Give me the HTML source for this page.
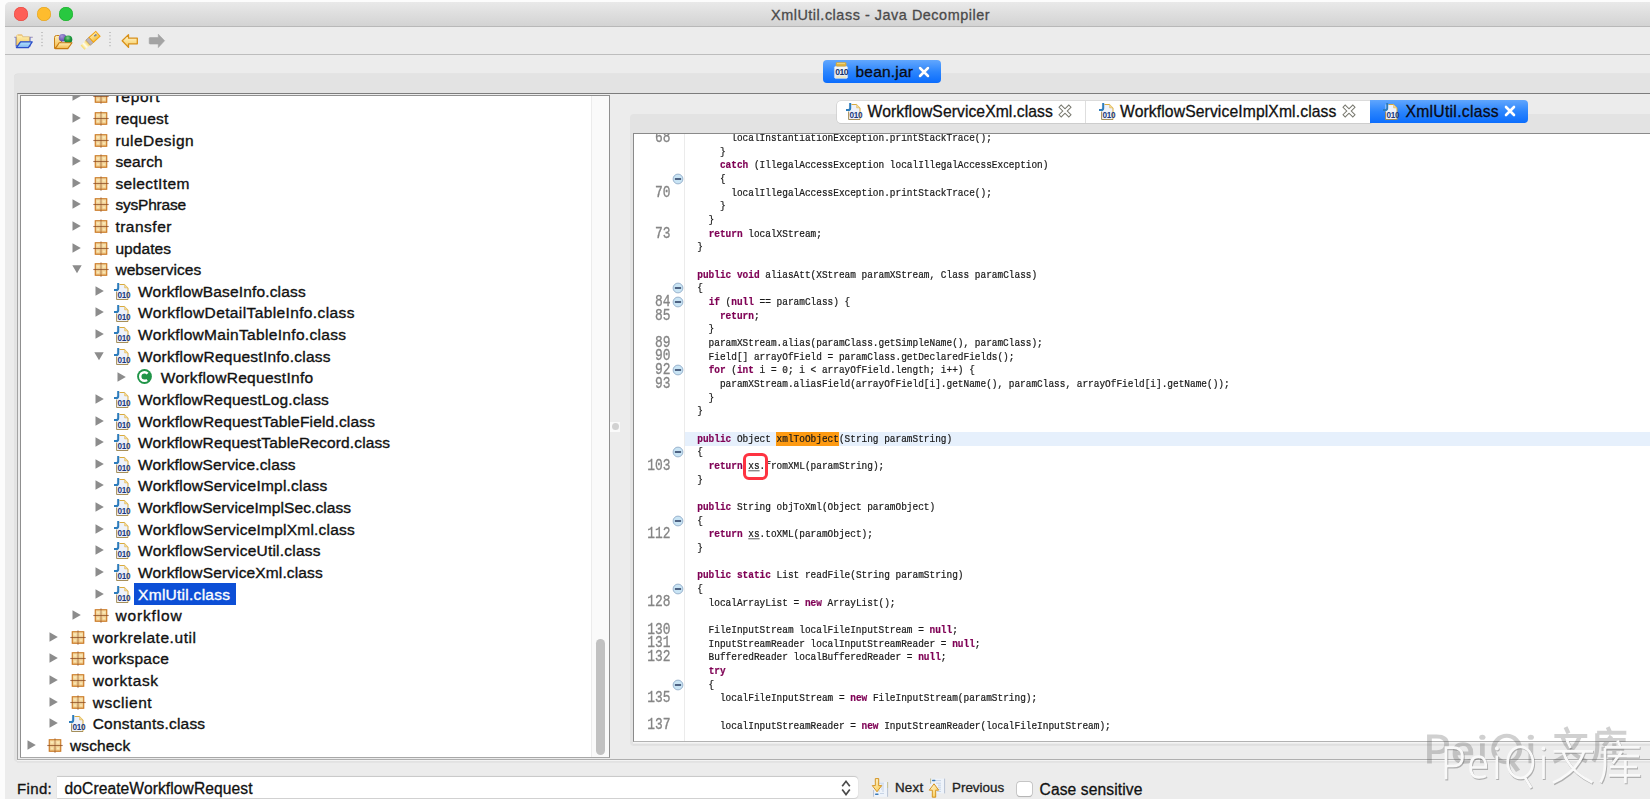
<!DOCTYPE html><html><head><meta charset="utf-8"><style>
*{margin:0;padding:0;box-sizing:border-box}
html,body{width:1650px;height:799px;overflow:hidden;background:#fcfcfc;font-family:"Liberation Sans",sans-serif;position:relative}
.a{position:absolute}
.t{position:absolute;white-space:pre;line-height:1;color:#111;-webkit-text-stroke:0.3px currentColor}
.tr{position:absolute;white-space:pre;line-height:1;font-size:15.5px;letter-spacing:0.1px;color:#111;-webkit-text-stroke:0.35px currentColor}
.cl{position:absolute;left:0;white-space:pre;font-family:"Liberation Mono",monospace;font-size:9.45px;line-height:1;color:#1a1a1a;-webkit-text-stroke:0.2px currentColor}
.k{color:#7f0055;font-weight:bold}
u{text-decoration-color:#777}
.ln{position:absolute;white-space:pre;font-family:"Liberation Mono",monospace;font-size:12.9px;line-height:1;color:#858585;transform:scaleY(1.27);-webkit-text-stroke:0.25px currentColor}
svg{position:absolute;overflow:visible}
</style></head><body><svg width="0" height="0" style="position:absolute"><defs>
<linearGradient id="gpk" x1="0" y1="0" x2="0" y2="1"><stop offset="0" stop-color="#f6deaa"/><stop offset="1" stop-color="#eec685"/></linearGradient>
<radialGradient id="gspot"><stop offset="0" stop-color="#fff6c8"/><stop offset="1" stop-color="#f3d49a" stop-opacity="0"/></radialGradient>
<symbol id="pkg" viewBox="0 0 16 16">
 <rect x="2.25" y="1.75" width="11.5" height="11.5" fill="url(#gpk)" stroke="#c9751e" stroke-width="1.1"/>
 <circle cx="5" cy="4.6" r="2.2" fill="url(#gspot)"/><circle cx="11" cy="4.6" r="2.2" fill="url(#gspot)"/>
 <circle cx="5" cy="10.4" r="2.2" fill="url(#gspot)"/><circle cx="11" cy="10.4" r="2.2" fill="url(#gspot)"/>
 <line x1="0.3" y1="7.5" x2="15.7" y2="7.5" stroke="#8a4a22" stroke-width="1.1" stroke-opacity="0.75"/>
 <line x1="8" y1="0.2" x2="8" y2="15" stroke="#8a4a22" stroke-width="1.1" stroke-opacity="0.55"/>
</symbol>
<symbol id="cls" viewBox="0 0 18 17">
 <path d="M2.6,16.5 V1.5 H10.6 L14,4.9 V16.5 Z" fill="#eef2fa"/>
 <path d="M5.5,1.5 H10.6 L14,4.9 V16.5" fill="none" stroke="#d6a534" stroke-width="0.95"/>
 <path d="M10.6,1.5 V4.9 H14" fill="#f4dc98" stroke="#e0b048" stroke-width="0.5"/>
 <path d="M2.6,8.5 V16.5 H14" stroke="#a08850" stroke-width="0.95" fill="none"/>
 <path d="M4.2,0 V5.2 Q4.2,7 2.3,7 H0" fill="none" stroke="#2c7cbc" stroke-width="2"/>
 <text x="3.6" y="14.8" font-family="Liberation Sans" font-weight="bold" font-size="8.2" fill="#1c3a80" letter-spacing="-0.35">010</text>
</symbol>
<symbol id="arR" viewBox="0 0 10 10"><path d="M0.5,0.3 L8.8,5 L0.5,9.7 Z" fill="#8c8c8c"/></symbol>
<symbol id="arD" viewBox="0 0 10 10"><path d="M0.3,1.3 L9.7,1.3 L5,9.2 Z" fill="#8c8c8c"/></symbol>
<symbol id="fold" viewBox="0 0 12 12">
 <circle cx="6" cy="6" r="4.9" fill="#c9e4f4" stroke="#93adc8" stroke-width="0.9"/>
 <rect x="2.9" y="5.25" width="6.2" height="1.5" fill="#26385e"/>
</symbol>
</defs></svg><div class="a" style="left:5px;top:2px;width:1650px;height:797px;background:#ececec;border-top-left-radius:5px"></div><div class="a" style="left:5px;top:2px;width:1650px;height:25px;background:linear-gradient(#e9e9e9,#d3d3d3);border-top-left-radius:5px;border-bottom:1px solid #b8b8b8"></div><div class="a" style="left:14px;top:7.2px;width:14px;height:14px;border-radius:50%;background:#fe5f57;box-shadow:inset 0 0 0 0.5px #e2463f"></div><div class="a" style="left:36.8px;top:7.2px;width:14px;height:14px;border-radius:50%;background:#febc2e;box-shadow:inset 0 0 0 0.5px #dea123"></div><div class="a" style="left:59.3px;top:7.2px;width:14px;height:14px;border-radius:50%;background:#28c840;box-shadow:inset 0 0 0 0.5px #1dad2b"></div><div class="t" style="left:771px;top:7.71px;font-size:14.4px;letter-spacing:0.54px;color:#4a4a4a">XmlUtil.class - Java Decompiler</div><div class="a" style="left:5px;top:53.8px;width:1650px;height:1.4px;background:#bdbdbd"></div><svg style="left:13px;top:33px" width="20" height="16" viewBox="0 0 20 16">
<defs><linearGradient id="gfy" x1="0" y1="0" x2="0" y2="1"><stop offset="0" stop-color="#fff2b8"/><stop offset="1" stop-color="#f4c85a"/></linearGradient>
<linearGradient id="gfb" x1="0" y1="0" x2="0" y2="1"><stop offset="0" stop-color="#b4e6ff"/><stop offset="1" stop-color="#7fb2ee"/></linearGradient></defs>
<path d="M1.2,3.8 H19.8 V4.6 H1.2 Z" fill="#8b7aa8"/>
<path d="M2.6,4.2 V13.6 H17.5 V4.2 Z" fill="#5060c8"/>
<path d="M3.6,12 L3.6,3 Q3.6,1.8 4.8,1.8 H8.4 Q9.4,1.8 9.6,3 V3.8 H16.4 V8.6 H7.6 L4.4,12.5 Z" fill="url(#gfy)" stroke="#e0b050" stroke-width="0.5"/>
<path d="M5,1.6 H9.2 V2.6 H5 Z" fill="#e8b870"/>
<path d="M7.6,8.8 H19.2 L15.4,14.6 H3.4 Z" fill="url(#gfb)" stroke="#2c4fc8" stroke-width="1.3" stroke-linejoin="round"/>
</svg><svg style="left:41.4px;top:31px" width="2" height="16" viewBox="0 0 2 16"><g fill="#9a9a9a"><rect x="0.5" y="1" width="1" height="1"/><rect x="0.5" y="4.3" width="1" height="1"/><rect x="0.5" y="7.6" width="1" height="1"/><rect x="0.5" y="10.9" width="1" height="1"/><rect x="0.5" y="14.2" width="1" height="1"/></g></svg><svg style="left:108.5px;top:31px" width="2" height="16" viewBox="0 0 2 16"><g fill="#9a9a9a"><rect x="0.5" y="1" width="1" height="1"/><rect x="0.5" y="4.3" width="1" height="1"/><rect x="0.5" y="7.6" width="1" height="1"/><rect x="0.5" y="10.9" width="1" height="1"/><rect x="0.5" y="14.2" width="1" height="1"/></g></svg><svg style="left:53px;top:32px" width="20" height="18" viewBox="0 0 20 18">
<defs><linearGradient id="gfo" x1="0" y1="0" x2="0" y2="1"><stop offset="0" stop-color="#fff0b8"/><stop offset="1" stop-color="#f2b848"/></linearGradient>
<radialGradient id="gsp1" cx="0.4" cy="0.3" r="0.7"><stop offset="0" stop-color="#a89ad8"/><stop offset="1" stop-color="#5a44a8"/></radialGradient>
<radialGradient id="gsp2" cx="0.45" cy="0.3" r="0.7"><stop offset="0" stop-color="#8ad08a"/><stop offset="0.5" stop-color="#1e9a40"/><stop offset="1" stop-color="#127a30"/></radialGradient></defs>
<path d="M1.5,16.5 V5.5 Q1.5,3.5 3.5,3.5 H6 L7,5 H9 V9 Z" fill="url(#gfo)" stroke="#c88018" stroke-width="1"/>
<circle cx="9.6" cy="5.8" r="3.8" fill="url(#gsp1)"/>
<circle cx="15.2" cy="7.6" r="4.1" fill="url(#gsp2)"/>
<path d="M6.2,10.7 H19 L14.8,16.6 H2.3 Z" fill="url(#gfo)" stroke="#c87a10" stroke-width="1.1" stroke-linejoin="round"/>
</svg><svg style="left:79px;top:30px" width="23" height="21" viewBox="0 0 23 21">
<defs><linearGradient id="gpen" x1="0" y1="0" x2="1" y2="0"><stop offset="0" stop-color="#f8d860"/><stop offset="0.45" stop-color="#fffef0"/><stop offset="1" stop-color="#f6d050"/></linearGradient>
<linearGradient id="gcap" x1="0" y1="0" x2="0" y2="1"><stop offset="0" stop-color="#ffe9a0"/><stop offset="1" stop-color="#f4c040"/></linearGradient></defs>
<g transform="translate(11.4,10.6) rotate(-42) scale(0.86,0.92)">
<path d="M-12.2,-3.2 L-3.5,-3.6 V3.6 L-12.2,3.2 Z" fill="url(#gpen)"/>
<rect x="-3.6" y="-3.7" width="5" height="7.4" fill="#b9b2bc" stroke="#a88c58" stroke-width="0.7"/>
<rect x="1.4" y="-3.5" width="10.4" height="7" fill="url(#gcap)" stroke="#f0a010" stroke-width="1.1"/>
<circle cx="7.6" cy="-0.6" r="0.8" fill="#3a5aa8"/><circle cx="9.2" cy="-0.6" r="0.8" fill="#3a5aa8"/>
</g>
</svg><svg style="left:121px;top:33px" width="18" height="16" viewBox="0 0 18 16">
<defs><linearGradient id="garr" x1="0" y1="0" x2="0" y2="1"><stop offset="0" stop-color="#fffae0"/><stop offset="1" stop-color="#f6c850"/></linearGradient></defs>
<path d="M1.2,7.7 L7.5,1.6 V5.2 H16.3 V10.8 H7.5 V14.4 Z" fill="url(#garr)" stroke="#d89018" stroke-width="1.3" stroke-linejoin="round"/>
</svg><svg style="left:148px;top:33px" width="18" height="16" viewBox="0 0 18 16">
<path d="M16.6,7.7 L10.3,1.2 V4.6 H2 Q1.2,4.6 1.2,5.4 V10.2 Q1.2,11 2,11 H10.3 V14.6 Z" fill="#a3a3a3" stroke="#a3a3a3" stroke-width="0.6" stroke-linejoin="round"/>
</svg><div class="a" style="left:14px;top:74px;width:1650px;height:688px;background:#e3e3e3;border-radius:4px;box-shadow:0 -0.5px 0 #dcdcdc"></div><div class="a" style="left:17px;top:93px;width:1650px;height:667px;background:#ececec;border-top:1px solid #7c7c7c;border-left:1.5px solid #a4a4a4;border-bottom:1.8px solid #afafaf;box-shadow:0 1.2px 0 #f3f3f3, 0 2.6px 0 #dedede"></div><div class="a" style="left:822.5px;top:60px;width:118px;height:23px;border-radius:4px;background:linear-gradient(#62a7fd,#2d86fd 50%,#0a6cfd)"></div><svg style="left:834px;top:62px" width="14" height="17" viewBox="0 0 14 17">
<defs><linearGradient id="gjar" x1="0" y1="0" x2="0" y2="1"><stop offset="0" stop-color="#f4f8fc"/><stop offset="1" stop-color="#dfe8f2"/></linearGradient></defs>
<path d="M1.2,4.2 H12.8 L13.6,5.4 V15.2 L12.6,16.6 H1.4 L0.4,15.2 V5.4 Z" fill="url(#gjar)" stroke="#cfd8e4" stroke-width="0.5"/>
<rect x="1.8" y="0.2" width="10.6" height="4.3" rx="1.4" fill="#d9ad3c"/>
<rect x="3" y="1" width="8" height="1.2" fill="#ecd27a"/>
<rect x="2.2" y="14.3" width="9.8" height="1.5" fill="#f2e6b4"/>
<text x="1.2" y="12.6" font-family="Liberation Sans" font-weight="bold" font-size="8.6" fill="#17346e" letter-spacing="-0.45">010</text>
</svg><div class="t" style="left:855.5px;top:63.58px;font-size:15.5px;letter-spacing:0.2px;color:#0a0a12">bean.jar</div><svg style="left:918.3px;top:65.5px" width="12" height="12" viewBox="0 0 12 12"><path d="M2,2 L10,10 M10,2 L2,10" stroke="#5a6f90" stroke-width="3.4" stroke-linecap="round" stroke-opacity="0.35"/><path d="M2,2 L10,10 M10,2 L2,10" stroke="#fff" stroke-width="2.5" stroke-linecap="round"/></svg><div class="a" style="left:20px;top:95px;width:590px;height:663px;background:#fff;border:1px solid #8f8f8f;border-bottom-color:#a8a8a8;overflow:hidden" id="tree"><div class="a" style="left:570px;top:0;width:19px;height:661px;background:#fafafa;border-left:1px solid #ececec"></div><div class="a" style="left:574.5px;top:543px;width:9px;height:116px;border-radius:4.5px;background:#c1c1c1"></div><svg style="left:50.90px;top:-4.72px" width="10" height="10"><use href="#arR"/></svg><svg style="left:71.50px;top:-6.72px" width="16" height="16"><use href="#pkg"/></svg><div class="tr" style="left:94.40px;top:-6.74px;letter-spacing:0.740px">report</div><svg style="left:50.90px;top:16.90px" width="10" height="10"><use href="#arR"/></svg><svg style="left:71.50px;top:14.90px" width="16" height="16"><use href="#pkg"/></svg><div class="tr" style="left:94.40px;top:14.88px;letter-spacing:0.183px">request</div><svg style="left:50.90px;top:38.52px" width="10" height="10"><use href="#arR"/></svg><svg style="left:71.50px;top:36.52px" width="16" height="16"><use href="#pkg"/></svg><div class="tr" style="left:94.40px;top:36.50px;letter-spacing:0.456px">ruleDesign</div><svg style="left:50.90px;top:60.14px" width="10" height="10"><use href="#arR"/></svg><svg style="left:71.50px;top:58.14px" width="16" height="16"><use href="#pkg"/></svg><div class="tr" style="left:94.40px;top:58.12px;letter-spacing:0.160px">search</div><svg style="left:50.90px;top:81.76px" width="10" height="10"><use href="#arR"/></svg><svg style="left:71.50px;top:79.76px" width="16" height="16"><use href="#pkg"/></svg><div class="tr" style="left:94.40px;top:79.74px;letter-spacing:0.367px">selectItem</div><svg style="left:50.90px;top:103.38px" width="10" height="10"><use href="#arR"/></svg><svg style="left:71.50px;top:101.38px" width="16" height="16"><use href="#pkg"/></svg><div class="tr" style="left:94.40px;top:101.36px;letter-spacing:-0.200px">sysPhrase</div><svg style="left:50.90px;top:125.00px" width="10" height="10"><use href="#arR"/></svg><svg style="left:71.50px;top:123.00px" width="16" height="16"><use href="#pkg"/></svg><div class="tr" style="left:94.40px;top:122.98px;letter-spacing:0.500px">transfer</div><svg style="left:50.90px;top:146.62px" width="10" height="10"><use href="#arR"/></svg><svg style="left:71.50px;top:144.62px" width="16" height="16"><use href="#pkg"/></svg><div class="tr" style="left:94.40px;top:144.60px;letter-spacing:0.067px">updates</div><svg style="left:50.60px;top:168.44px" width="10" height="10"><use href="#arD"/></svg><svg style="left:71.50px;top:166.24px" width="16" height="16"><use href="#pkg"/></svg><div class="tr" style="left:94.40px;top:166.22px;letter-spacing:0.050px">webservices</div><svg style="left:73.60px;top:189.86px" width="10" height="10"><use href="#arR"/></svg><svg style="left:93.30px;top:186.96px" width="18" height="17"><use href="#cls"/></svg><div class="tr" style="left:117.10px;top:187.84px;letter-spacing:0.157px">WorkflowBaseInfo.class</div><svg style="left:73.60px;top:211.48px" width="10" height="10"><use href="#arR"/></svg><svg style="left:93.30px;top:208.58px" width="18" height="17"><use href="#cls"/></svg><div class="tr" style="left:117.10px;top:209.46px;letter-spacing:0.382px">WorkflowDetailTableInfo.class</div><svg style="left:73.60px;top:233.10px" width="10" height="10"><use href="#arR"/></svg><svg style="left:93.30px;top:230.20px" width="18" height="17"><use href="#cls"/></svg><div class="tr" style="left:117.10px;top:231.08px;letter-spacing:0.323px">WorkflowMainTableInfo.class</div><svg style="left:73.30px;top:254.92px" width="10" height="10"><use href="#arD"/></svg><svg style="left:93.30px;top:251.82px" width="18" height="17"><use href="#cls"/></svg><div class="tr" style="left:117.10px;top:252.70px;letter-spacing:0.242px">WorkflowRequestInfo.class</div><svg style="left:96.30px;top:276.34px" width="10" height="10"><use href="#arR"/></svg><svg style="left:116.00px;top:273.44px" width="15" height="15" viewBox="0 0 15 15"><circle cx="7.5" cy="7.5" r="7.4" fill="#1f9447"/><circle cx="7.5" cy="7.5" r="4.3" fill="none" stroke="#fff" stroke-width="2.5" stroke-dasharray="19.3 7.7" stroke-dashoffset="-3.85"/></svg><div class="tr" style="left:139.80px;top:274.32px;letter-spacing:0.300px">WorkflowRequestInfo</div><svg style="left:73.60px;top:297.96px" width="10" height="10"><use href="#arR"/></svg><svg style="left:93.30px;top:295.06px" width="18" height="17"><use href="#cls"/></svg><div class="tr" style="left:117.10px;top:295.94px;letter-spacing:0.178px">WorkflowRequestLog.class</div><svg style="left:73.60px;top:319.58px" width="10" height="10"><use href="#arR"/></svg><svg style="left:93.30px;top:316.68px" width="18" height="17"><use href="#cls"/></svg><div class="tr" style="left:117.10px;top:317.56px;letter-spacing:0.180px">WorkflowRequestTableField.class</div><svg style="left:73.60px;top:341.20px" width="10" height="10"><use href="#arR"/></svg><svg style="left:93.30px;top:338.30px" width="18" height="17"><use href="#cls"/></svg><div class="tr" style="left:117.10px;top:339.18px;letter-spacing:0.135px">WorkflowRequestTableRecord.class</div><svg style="left:73.60px;top:362.82px" width="10" height="10"><use href="#arR"/></svg><svg style="left:93.30px;top:359.92px" width="18" height="17"><use href="#cls"/></svg><div class="tr" style="left:117.10px;top:360.80px;letter-spacing:0.135px">WorkflowService.class</div><svg style="left:73.60px;top:384.44px" width="10" height="10"><use href="#arR"/></svg><svg style="left:93.30px;top:381.54px" width="18" height="17"><use href="#cls"/></svg><div class="tr" style="left:117.10px;top:382.42px;letter-spacing:0.212px">WorkflowServiceImpl.class</div><svg style="left:73.60px;top:406.06px" width="10" height="10"><use href="#arR"/></svg><svg style="left:93.30px;top:403.16px" width="18" height="17"><use href="#cls"/></svg><div class="tr" style="left:117.10px;top:404.04px;letter-spacing:0.081px">WorkflowServiceImplSec.class</div><svg style="left:73.60px;top:427.68px" width="10" height="10"><use href="#arR"/></svg><svg style="left:93.30px;top:424.78px" width="18" height="17"><use href="#cls"/></svg><div class="tr" style="left:117.10px;top:425.66px;letter-spacing:0.222px">WorkflowServiceImplXml.class</div><svg style="left:73.60px;top:449.30px" width="10" height="10"><use href="#arR"/></svg><svg style="left:93.30px;top:446.40px" width="18" height="17"><use href="#cls"/></svg><div class="tr" style="left:117.10px;top:447.28px;letter-spacing:0.217px">WorkflowServiceUtil.class</div><svg style="left:73.60px;top:470.92px" width="10" height="10"><use href="#arR"/></svg><svg style="left:93.30px;top:468.02px" width="18" height="17"><use href="#cls"/></svg><div class="tr" style="left:117.10px;top:468.90px;letter-spacing:0.139px">WorkflowServiceXml.class</div><svg style="left:73.60px;top:492.54px" width="10" height="10"><use href="#arR"/></svg><svg style="left:93.30px;top:489.64px" width="18" height="17"><use href="#cls"/></svg><div class="a" style="left:112.80px;top:487.30px;width:102.2px;height:21.4px;background:#0d4fd6"></div><div class="tr" style="left:117.10px;top:490.52px;color:#fff;letter-spacing:0.267px">XmlUtil.class</div><svg style="left:50.90px;top:514.16px" width="10" height="10"><use href="#arR"/></svg><svg style="left:71.50px;top:512.16px" width="16" height="16"><use href="#pkg"/></svg><div class="tr" style="left:94.40px;top:512.14px;letter-spacing:0.843px">workflow</div><svg style="left:28.20px;top:535.78px" width="10" height="10"><use href="#arR"/></svg><svg style="left:48.80px;top:533.78px" width="16" height="16"><use href="#pkg"/></svg><div class="tr" style="left:71.70px;top:533.76px;letter-spacing:0.543px">workrelate.util</div><svg style="left:28.20px;top:557.40px" width="10" height="10"><use href="#arR"/></svg><svg style="left:48.80px;top:555.40px" width="16" height="16"><use href="#pkg"/></svg><div class="tr" style="left:71.70px;top:555.38px;letter-spacing:0.250px">workspace</div><svg style="left:28.20px;top:579.02px" width="10" height="10"><use href="#arR"/></svg><svg style="left:48.80px;top:577.02px" width="16" height="16"><use href="#pkg"/></svg><div class="tr" style="left:71.70px;top:577.00px;letter-spacing:0.600px">worktask</div><svg style="left:28.20px;top:600.64px" width="10" height="10"><use href="#arR"/></svg><svg style="left:48.80px;top:598.64px" width="16" height="16"><use href="#pkg"/></svg><div class="tr" style="left:71.70px;top:598.62px;letter-spacing:0.543px">wsclient</div><svg style="left:28.20px;top:622.26px" width="10" height="10"><use href="#arR"/></svg><svg style="left:47.90px;top:619.36px" width="18" height="17"><use href="#cls"/></svg><div class="tr" style="left:71.70px;top:620.24px;letter-spacing:0.214px">Constants.class</div><svg style="left:5.50px;top:643.88px" width="10" height="10"><use href="#arR"/></svg><svg style="left:26.10px;top:641.88px" width="16" height="16"><use href="#pkg"/></svg><div class="tr" style="left:49.00px;top:641.86px;letter-spacing:0.117px">wscheck</div></div><div class="a" style="left:610px;top:422px;width:10px;height:10px;background:#fafafa"></div><div class="a" style="left:611.8px;top:423.1px;width:7px;height:7px;border-radius:50%;background:#d2d2d2"></div><div class="a" style="left:630px;top:113.5px;width:1040px;height:632px;background:#e3e3e3;border-radius:4px"></div><div class="a" style="left:837px;top:100.5px;width:534px;height:22px;background:#fff;border-radius:4px 0 0 4px;box-shadow:0 0 0 0.6px #c9c9c9, 0 0.6px 0.6px #bdbdbd"></div><div class="a" style="left:1085px;top:100.5px;width:1px;height:22px;background:#dedede"></div><div class="a" style="left:1370px;top:100px;width:158px;height:23px;border-radius:0 4px 4px 0;background:linear-gradient(#60a6fd,#2b85fd 50%,#0b6dfd)"></div><svg style="left:846px;top:103px" width="18" height="17"><use href="#cls"/></svg><div class="t" style="left:867.6px;top:103.81px;font-size:15.7px;letter-spacing:0.07px;color:#111">WorkflowServiceXml.class</div><svg style="left:1099px;top:103px" width="18" height="17"><use href="#cls"/></svg><div class="t" style="left:1120px;top:103.81px;font-size:15.7px;letter-spacing:0.115px;color:#111">WorkflowServiceImplXml.class</div><svg style="left:1383px;top:103px" width="18" height="17"><use href="#cls"/></svg><div class="t" style="left:1405.5px;top:103.81px;font-size:15.7px;letter-spacing:0.28px;color:#0a0a14">XmlUtil.class</div><svg style="left:1059.2px;top:105px" width="12" height="12" viewBox="0 0 12 12"><path d="M2.2,2.2 L9.8,9.8 M9.8,2.2 L2.2,9.8" stroke="#76766c" stroke-width="4.1" stroke-linecap="square"/><path d="M2.2,2.2 L9.8,9.8 M9.8,2.2 L2.2,9.8" stroke="#fff" stroke-width="2.2" stroke-linecap="square"/></svg><svg style="left:1343px;top:105px" width="12" height="12" viewBox="0 0 12 12"><path d="M2.2,2.2 L9.8,9.8 M9.8,2.2 L2.2,9.8" stroke="#76766c" stroke-width="4.1" stroke-linecap="square"/><path d="M2.2,2.2 L9.8,9.8 M9.8,2.2 L2.2,9.8" stroke="#fff" stroke-width="2.2" stroke-linecap="square"/></svg><svg style="left:1504px;top:105px" width="12" height="12" viewBox="0 0 12 12"><path d="M2,2 L10,10 M10,2 L2,10" stroke="#fff" stroke-width="2.6" stroke-linecap="round"/></svg><div class="a" style="left:633px;top:133px;width:1030px;height:609px;background:#fff;border:1px solid #8a8a8a;border-bottom:1.7px solid #b2b2b2;box-shadow:0 1.6px 0 #f5f5f5, 0 3.2px 0 #dfdfdf;overflow:hidden"><div class="a" style="left:50px;top:0;width:1px;height:610px;background:#ebebeb"></div><div class="cl" style="left:63.299999999999955px;top:0.16px;transform-origin:0 7.24px;transform:scaleY(1.2)">      localInstantiationException.printStackTrace();</div><div class="ln" style="left:20.92px;top:-1.08px;transform-origin:0 9.88px">68</div><div class="cl" style="left:63.299999999999955px;top:13.82px;transform-origin:0 7.24px;transform:scaleY(1.2)">    }</div><div class="cl" style="left:63.299999999999955px;top:27.48px;transform-origin:0 7.24px;transform:scaleY(1.2)">    <span class="k">catch</span> (IllegalAccessException localIllegalAccessException)</div><div class="cl" style="left:63.299999999999955px;top:41.14px;transform-origin:0 7.24px;transform:scaleY(1.2)">    {</div><svg style="left:38px;top:39.18px" width="12" height="12"><use href="#fold"/></svg><div class="cl" style="left:63.299999999999955px;top:54.80px;transform-origin:0 7.24px;transform:scaleY(1.2)">      localIllegalAccessException.printStackTrace();</div><div class="ln" style="left:20.92px;top:53.56px;transform-origin:0 9.88px">70</div><div class="cl" style="left:63.299999999999955px;top:68.46px;transform-origin:0 7.24px;transform:scaleY(1.2)">    }</div><div class="cl" style="left:63.299999999999955px;top:82.12px;transform-origin:0 7.24px;transform:scaleY(1.2)">  }</div><div class="cl" style="left:63.299999999999955px;top:95.78px;transform-origin:0 7.24px;transform:scaleY(1.2)">  <span class="k">return</span> localXStream;</div><div class="ln" style="left:20.92px;top:94.54px;transform-origin:0 9.88px">73</div><div class="cl" style="left:63.299999999999955px;top:109.44px;transform-origin:0 7.24px;transform:scaleY(1.2)">}</div><div class="cl" style="left:63.299999999999955px;top:123.10px;transform-origin:0 7.24px;transform:scaleY(1.2)"></div><div class="cl" style="left:63.299999999999955px;top:136.76px;transform-origin:0 7.24px;transform:scaleY(1.2)"><span class="k">public</span> <span class="k">void</span> aliasAtt(XStream paramXStream, Class paramClass)</div><div class="cl" style="left:63.299999999999955px;top:150.42px;transform-origin:0 7.24px;transform:scaleY(1.2)">{</div><svg style="left:38px;top:148.46px" width="12" height="12"><use href="#fold"/></svg><div class="cl" style="left:63.299999999999955px;top:164.08px;transform-origin:0 7.24px;transform:scaleY(1.2)">  <span class="k">if</span> (<span class="k">null</span> == paramClass) {</div><div class="ln" style="left:20.92px;top:162.84px;transform-origin:0 9.88px">84</div><svg style="left:38px;top:162.12px" width="12" height="12"><use href="#fold"/></svg><div class="cl" style="left:63.299999999999955px;top:177.74px;transform-origin:0 7.24px;transform:scaleY(1.2)">    <span class="k">return</span>;</div><div class="ln" style="left:20.92px;top:176.50px;transform-origin:0 9.88px">85</div><div class="cl" style="left:63.299999999999955px;top:191.40px;transform-origin:0 7.24px;transform:scaleY(1.2)">  }</div><div class="cl" style="left:63.299999999999955px;top:205.06px;transform-origin:0 7.24px;transform:scaleY(1.2)">  paramXStream.alias(paramClass.getSimpleName(), paramClass);</div><div class="ln" style="left:20.92px;top:203.82px;transform-origin:0 9.88px">89</div><div class="cl" style="left:63.299999999999955px;top:218.72px;transform-origin:0 7.24px;transform:scaleY(1.2)">  Field[] arrayOfField = paramClass.getDeclaredFields();</div><div class="ln" style="left:20.92px;top:217.48px;transform-origin:0 9.88px">90</div><div class="cl" style="left:63.299999999999955px;top:232.38px;transform-origin:0 7.24px;transform:scaleY(1.2)">  <span class="k">for</span> (<span class="k">int</span> i = 0; i &lt; arrayOfField.length; i++) {</div><div class="ln" style="left:20.92px;top:231.14px;transform-origin:0 9.88px">92</div><svg style="left:38px;top:230.42px" width="12" height="12"><use href="#fold"/></svg><div class="cl" style="left:63.299999999999955px;top:246.04px;transform-origin:0 7.24px;transform:scaleY(1.2)">    paramXStream.aliasField(arrayOfField[i].getName(), paramClass, arrayOfField[i].getName());</div><div class="ln" style="left:20.92px;top:244.80px;transform-origin:0 9.88px">93</div><div class="cl" style="left:63.299999999999955px;top:259.70px;transform-origin:0 7.24px;transform:scaleY(1.2)">  }</div><div class="cl" style="left:63.299999999999955px;top:273.36px;transform-origin:0 7.24px;transform:scaleY(1.2)">}</div><div class="cl" style="left:63.299999999999955px;top:287.02px;transform-origin:0 7.24px;transform:scaleY(1.2)"></div><div class="a" style="left:51px;top:298.10px;width:1000px;height:13.6px;background:#e6f0fc"></div><div class="a" style="left:142.20px;top:298.10px;width:62.8px;height:13.6px;background:#fd9a12"></div><div class="cl" style="left:63.299999999999955px;top:300.68px;transform-origin:0 7.24px;transform:scaleY(1.2)"><span class="k">public</span> Object xmlToObject(String paramString)</div><div class="cl" style="left:63.299999999999955px;top:314.34px;transform-origin:0 7.24px;transform:scaleY(1.2)">{</div><svg style="left:38px;top:312.38px" width="12" height="12"><use href="#fold"/></svg><div class="cl" style="left:63.299999999999955px;top:328.00px;transform-origin:0 7.24px;transform:scaleY(1.2)">  <span class="k">return</span> <u>xs</u>.fromXML(paramString);</div><div class="ln" style="left:13.18px;top:326.76px;transform-origin:0 9.88px">103</div><div class="cl" style="left:63.299999999999955px;top:341.66px;transform-origin:0 7.24px;transform:scaleY(1.2)">}</div><div class="cl" style="left:63.299999999999955px;top:355.32px;transform-origin:0 7.24px;transform:scaleY(1.2)"></div><div class="cl" style="left:63.299999999999955px;top:368.98px;transform-origin:0 7.24px;transform:scaleY(1.2)"><span class="k">public</span> String objToXml(Object paramObject)</div><div class="cl" style="left:63.299999999999955px;top:382.64px;transform-origin:0 7.24px;transform:scaleY(1.2)">{</div><svg style="left:38px;top:380.68px" width="12" height="12"><use href="#fold"/></svg><div class="cl" style="left:63.299999999999955px;top:396.30px;transform-origin:0 7.24px;transform:scaleY(1.2)">  <span class="k">return</span> <u>xs</u>.toXML(paramObject);</div><div class="ln" style="left:13.18px;top:395.06px;transform-origin:0 9.88px">112</div><div class="cl" style="left:63.299999999999955px;top:409.96px;transform-origin:0 7.24px;transform:scaleY(1.2)">}</div><div class="cl" style="left:63.299999999999955px;top:423.62px;transform-origin:0 7.24px;transform:scaleY(1.2)"></div><div class="cl" style="left:63.299999999999955px;top:437.28px;transform-origin:0 7.24px;transform:scaleY(1.2)"><span class="k">public</span> <span class="k">static</span> List readFile(String paramString)</div><div class="cl" style="left:63.299999999999955px;top:450.94px;transform-origin:0 7.24px;transform:scaleY(1.2)">{</div><svg style="left:38px;top:448.98px" width="12" height="12"><use href="#fold"/></svg><div class="cl" style="left:63.299999999999955px;top:464.60px;transform-origin:0 7.24px;transform:scaleY(1.2)">  localArrayList = <span class="k">new</span> ArrayList();</div><div class="ln" style="left:13.18px;top:463.36px;transform-origin:0 9.88px">128</div><div class="cl" style="left:63.299999999999955px;top:478.26px;transform-origin:0 7.24px;transform:scaleY(1.2)"></div><div class="cl" style="left:63.299999999999955px;top:491.92px;transform-origin:0 7.24px;transform:scaleY(1.2)">  FileInputStream localFileInputStream = <span class="k">null</span>;</div><div class="ln" style="left:13.18px;top:490.68px;transform-origin:0 9.88px">130</div><div class="cl" style="left:63.299999999999955px;top:505.58px;transform-origin:0 7.24px;transform:scaleY(1.2)">  InputStreamReader localInputStreamReader = <span class="k">null</span>;</div><div class="ln" style="left:13.18px;top:504.34px;transform-origin:0 9.88px">131</div><div class="cl" style="left:63.299999999999955px;top:519.24px;transform-origin:0 7.24px;transform:scaleY(1.2)">  BufferedReader localBufferedReader = <span class="k">null</span>;</div><div class="ln" style="left:13.18px;top:518.00px;transform-origin:0 9.88px">132</div><div class="cl" style="left:63.299999999999955px;top:532.90px;transform-origin:0 7.24px;transform:scaleY(1.2)">  <span class="k">try</span></div><div class="cl" style="left:63.299999999999955px;top:546.56px;transform-origin:0 7.24px;transform:scaleY(1.2)">  {</div><svg style="left:38px;top:544.60px" width="12" height="12"><use href="#fold"/></svg><div class="cl" style="left:63.299999999999955px;top:560.22px;transform-origin:0 7.24px;transform:scaleY(1.2)">    localFileInputStream = <span class="k">new</span> FileInputStream(paramString);</div><div class="ln" style="left:13.18px;top:558.98px;transform-origin:0 9.88px">135</div><div class="cl" style="left:63.299999999999955px;top:573.88px;transform-origin:0 7.24px;transform:scaleY(1.2)"></div><div class="cl" style="left:63.299999999999955px;top:587.54px;transform-origin:0 7.24px;transform:scaleY(1.2)">    localInputStreamReader = <span class="k">new</span> InputStreamReader(localFileInputStream);</div><div class="ln" style="left:13.18px;top:586.30px;transform-origin:0 9.88px">137</div><div class="a" style="left:109.30px;top:319.10px;width:24.8px;height:26.7px;border:3.2px solid #fe3341;border-radius:6px"></div></div><div class="t" style="left:17px;top:780.90px;font-size:15px;letter-spacing:0.35px;color:#111">Find:</div><div class="a" style="left:57px;top:777px;width:801px;height:21px;background:#fff;border-radius:0 4px 4px 0;box-shadow:0 -0.7px 0.8px #c8c8c8, 0 0.6px 1px #d0d0d0"></div><div class="t" style="left:64.5px;top:781.29px;font-size:15.6px;letter-spacing:0.09px;color:#111">doCreateWorkflowRequest</div><svg style="left:840px;top:779px" width="12" height="18" viewBox="0 0 12 18"><path d="M2.2,7.2 L6,2.3 L9.8,7.2 M2.2,10.6 L6,15.5 L9.8,10.6" fill="none" stroke="#4a4a4a" stroke-width="1.7"/></svg><svg width="0" height="0" style="position:absolute"><defs><linearGradient id="gfa" x1="0" y1="0" x2="1" y2="1"><stop offset="0" stop-color="#fffbe8"/><stop offset="1" stop-color="#f8c640"/></linearGradient></defs></svg><svg style="left:871.5px;top:778px" width="17" height="20" viewBox="0 0 17 20"><rect x="1.5" y="4" width="14.3" height="14.8" fill="#eef3fa"/><path d="M1.6,12 V18.8 M15.6,4 V18.8" stroke="#a8b4c8" stroke-width="0.8"/><path d="M15.6,4 V10" stroke="#c8c080" stroke-width="0.8"/><path d="M7,5.2 H12 M9,7 H12 M9,9 H12 M9,11 H12 M6,13 H8 M10,13 H12 M8,15.5 H12" stroke="#b6c6dc" stroke-width="0.7"/><rect x="3" y="15.4" width="3.6" height="1.5" rx="0.7" fill="#3a7ab8"/><path d="M3.3,0.6 H6.7 V7.6 H9.7 L5,13.8 L0.3,7.6 H3.3 Z" fill="url(#gfa)" stroke="#d08a10" stroke-width="0.9" stroke-linejoin="round"/></svg><svg style="left:928.6px;top:778px" width="17" height="20" viewBox="0 0 17 20"><rect x="1.5" y="0.6" width="14.3" height="14.8" fill="#eef3fa"/><path d="M1.6,0.6 V6 M15.6,0.6 V15.4" stroke="#a8b4c8" stroke-width="0.8"/><path d="M1.6,0.6 V5" stroke="#c8c080" stroke-width="0.8"/><path d="M7,2.6 H12 M7,5.2 H12 M9,7.2 H12 M9,9.2 H12 M9,11.2 H12 M8,13.5 H12" stroke="#b6c6dc" stroke-width="0.7"/><rect x="3" y="1.8" width="3.6" height="1.5" rx="0.7" fill="#3a7ab8"/><path d="M3.3,19.2 H6.7 V12.2 H9.7 L5,5.8 L0.3,12.2 H3.3 Z" fill="url(#gfa)" stroke="#d08a10" stroke-width="0.9" stroke-linejoin="round"/></svg><div class="t" style="left:895px;top:781.46px;font-size:13.4px;letter-spacing:0.2px;color:#222">Next</div><div class="t" style="left:952px;top:781.46px;font-size:13.4px;letter-spacing:0.0px;color:#222">Previous</div><div class="a" style="left:1017.2px;top:781.6px;width:14.4px;height:14.6px;background:#fff;border-radius:3px;box-shadow:0 0 0 0.7px #b9b9b9, 0 0.7px 0.7px #aaa"></div><div class="t" style="left:1039.6px;top:781.79px;font-size:15.6px;letter-spacing:0.1px;color:#111">Case sensitive</div><svg style="left:0;top:0" width="1650" height="799" viewBox="0 0 1650 799"><defs><filter id="wblur" x="-10%" y="-10%" width="120%" height="120%"><feGaussianBlur stdDeviation="0.6"/></filter></defs><g opacity="0.27" filter="url(#wblur)"><g transform="translate(-74.4,99.5) scale(1.04,0.852)"><g fill="none" stroke="#555" stroke-width="4.6"><path d="M1446,779.3 V747.6 H1453 Q1462.5,747.6 1462.5,756.8 Q1462.5,766 1453,766 H1446 M1470.8,767.5 H1485.8 Q1486,756.6 1478.2,756.6 Q1470.6,756.6 1470.6,767.5 Q1470.6,777.4 1479,777.4 Q1483.5,777.4 1486,775.8 M1496.9,755.6 V779 M1543.5,755.6 V779 M1524.6,777 L1531.2,788"/><ellipse cx="1520.3" cy="762.4" rx="12.6" ry="15.6"/></g><g fill="#555"><circle cx="1496.9" cy="748.5" r="3"/><circle cx="1543.5" cy="748.5" r="3"/></g></g><g transform="translate(257.1,120.7) scale(0.835,0.819)"><path d="M1567,740.5 L1570.5,748 M1553.6,751.3 H1593 M1583.8,752 Q1577,772 1553,782.8 M1563.2,752 Q1570,772 1592.5,782.4 M1617.5,740.5 L1620.5,747 M1604.8,747.3 H1639.8 M1605,748 V765 Q1604.5,776 1600.4,782.4 M1607.4,756.1 H1639 M1621.9,751.3 L1612.7,763.5 M1610,767 H1637.2 M1609,775.4 H1640.3 M1625.4,760 V783.2" fill="none" stroke="#555" stroke-width="5"/></g></g><g transform="translate(0.8,1.1)"><g fill="none" stroke="rgba(90,90,90,0.42)" stroke-width="2.9" ><path d="M1446,779.3 V747.6 H1453 Q1462.5,747.6 1462.5,756.8 Q1462.5,766 1453,766 H1446 M1470.8,767.5 H1485.8 Q1486,756.6 1478.2,756.6 Q1470.6,756.6 1470.6,767.5 Q1470.6,777.4 1479,777.4 Q1483.5,777.4 1486,775.8 M1496.9,755.6 V779 M1543.5,755.6 V779 M1524.6,777 L1531.2,788"/><ellipse cx="1520.3" cy="762.4" rx="12.6" ry="15.6"/><path d="M1567,740.5 L1570.5,748 M1553.6,751.3 H1593 M1583.8,752 Q1577,772 1553,782.8 M1563.2,752 Q1570,772 1592.5,782.4 M1617.5,740.5 L1620.5,747 M1604.8,747.3 H1639.8 M1605,748 V765 Q1604.5,776 1600.4,782.4 M1607.4,756.1 H1639 M1621.9,751.3 L1612.7,763.5 M1610,767 H1637.2 M1609,775.4 H1640.3 M1625.4,760 V783.2"/></g><g fill="rgba(90,90,90,0.42)" ><circle cx="1496.9" cy="748.5" r="2"/><circle cx="1543.5" cy="748.5" r="2"/></g></g><g fill="none" stroke="#f9f9f9" stroke-width="2.7" ><path d="M1446,779.3 V747.6 H1453 Q1462.5,747.6 1462.5,756.8 Q1462.5,766 1453,766 H1446 M1470.8,767.5 H1485.8 Q1486,756.6 1478.2,756.6 Q1470.6,756.6 1470.6,767.5 Q1470.6,777.4 1479,777.4 Q1483.5,777.4 1486,775.8 M1496.9,755.6 V779 M1543.5,755.6 V779 M1524.6,777 L1531.2,788"/><ellipse cx="1520.3" cy="762.4" rx="12.6" ry="15.6"/><path d="M1567,740.5 L1570.5,748 M1553.6,751.3 H1593 M1583.8,752 Q1577,772 1553,782.8 M1563.2,752 Q1570,772 1592.5,782.4 M1617.5,740.5 L1620.5,747 M1604.8,747.3 H1639.8 M1605,748 V765 Q1604.5,776 1600.4,782.4 M1607.4,756.1 H1639 M1621.9,751.3 L1612.7,763.5 M1610,767 H1637.2 M1609,775.4 H1640.3 M1625.4,760 V783.2"/></g><g fill="#f9f9f9" ><circle cx="1496.9" cy="748.5" r="2"/><circle cx="1543.5" cy="748.5" r="2"/></g></svg></body></html>
